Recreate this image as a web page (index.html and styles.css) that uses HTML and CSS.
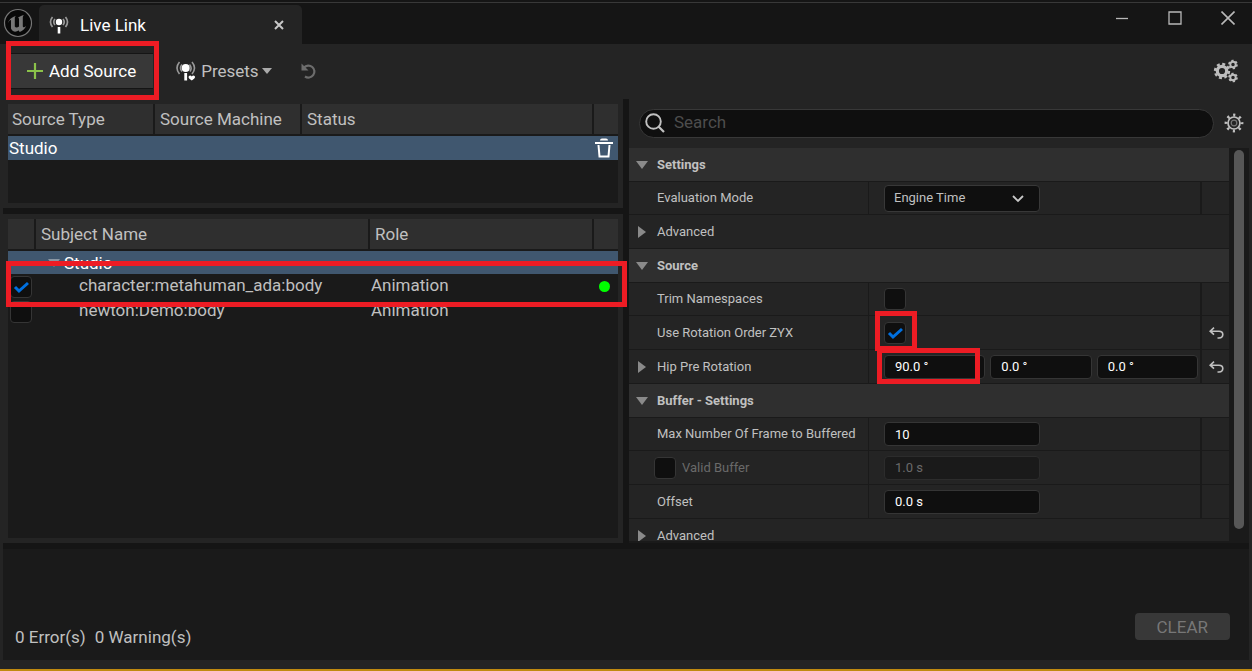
FILE: index.html
```html
<!DOCTYPE html>
<html lang="en">
<head>
<meta charset="utf-8">
<title>Live Link</title>
<link rel="stylesheet" href="styles.css">
</head>
<body>
<div class="window">
  <header class="titlebar">
    <svg class="logo" viewBox="0 0 30 30" aria-hidden="true">
      <circle cx="15" cy="15" r="13.5" fill="#080808" stroke="#777" stroke-width="1.2"/>
      <path d="M4.600 15.500C6 11.500 9 9 13 7.800C11.900 8.800 11.800 9.300 11.800 10.500V18.500C12.500 19.800 14.500 19.800 16 18.500V11C16 10 15.300 9.800 14.800 10C16.300 8.300 18.500 7.500 20.800 6.900C19.800 8.200 19.800 9 19.800 10V18C19.800 19.500 21 19.800 23.200 18C21.800 21 19.500 23 16.800 24L15.300 22.300C14.500 23.300 13.500 23.700 12 23.700C9.800 23.500 8.500 22 8 20.500V12.500C8 11.200 6.500 12 4.600 15.500Z" fill="#777"/>
    </svg>
    <div class="tab">
      <svg class="tab-icon" viewBox="0 0 20 20" aria-hidden="true">
        <g fill="none" stroke="#999" stroke-width="1.700"><path d="M3.500 2Q-.5 7 3.500 12M6 4Q3.500 7 6 10M16.500 2Q20.500 7 16.500 12M14 4Q16.500 7 14 10"/></g>
        <circle cx="10" cy="7" r="3.200" fill="#fff"/><path d="M8.700 12h2.600v6.500H8.700z" fill="#fff"/>
      </svg>
      <span class="tab-title">Live Link</span>
      <button class="icon-btn" aria-label="Close tab"><svg width="10" height="10" viewBox="0 0 10 10"><path d="M1 1l8 8M9 1l-8 8" stroke="#c8c8c8" stroke-width="2"/></svg></button>
    </div>
    <div class="window-buttons">
      <button class="icon-btn" aria-label="Minimize"><svg width="14" height="14" viewBox="0 0 14 14"><path d="M1 7.500h12" stroke="#b8b8b8" stroke-width="1.300"/></svg></button>
      <button class="icon-btn" aria-label="Maximize"><svg width="14" height="14" viewBox="0 0 14 14"><path d="M1 1h12v12H1z" fill="none" stroke="#b8b8b8" stroke-width="1.300"/></svg></button>
      <button class="icon-btn" aria-label="Close"><svg width="14" height="14" viewBox="0 0 14 14"><path d="M.5.5l13 13M13.500.5l-13 13" stroke="#b8b8b8" stroke-width="1.600"/></svg></button>
    </div>
  </header>

  <div class="toolbar">
    <div class="marked">
      <button class="add-source"><svg width="16" height="16" viewBox="0 0 16 16" aria-hidden="true"><path d="M8 0v16M0 8h16" stroke="#8bc24a" stroke-width="2.200"/></svg>Add Source</button>
      <span class="callout callout-add"></span>
    </div>
    <button class="tool presets">
      <svg width="20" height="20" viewBox="0 0 20 20" aria-hidden="true">
        <g fill="none" stroke="#999" stroke-width="1.600"><path d="M3.500 1Q-1.500 7 3.500 13M6 3.500Q3 7 6 10.500M16 1Q21 7 16 13M13.500 3.500Q16.500 7 14 10.500"/></g>
        <circle cx="9.700" cy="7" r="4" fill="#fff"/><path d="M8.300 12h2.800v7.500H8.300z" fill="#fff"/>
        <path d="M12.500 16.200q0-1.700 1.700-1.700 1 0 1.600 1 .6-1 1.600-1 1.700 0 1.700 1.700Q18.800 17.700 15.800 19.500 12.500 17.700 12.500 16.200" fill="#fff"/>
      </svg>
      <span>Presets</span>
      <svg class="caret" width="10" height="6" viewBox="0 0 10 6" aria-hidden="true"><path d="M0 0h10L5 6z" fill="#aaa"/></svg>
    </button>
    <button class="tool" aria-label="Revert changes"><svg width="18" height="18" viewBox="0 0 18 18"><path d="M4 5.500A6 6 0 1 1 5 14.500" fill="none" stroke="#6c6c6c" stroke-width="2.200"/><path d="M1.500 1.500v7h7z" fill="#6c6c6c"/></svg></button>
    <button class="tool gears" aria-label="Settings">
      <svg width="26" height="24" viewBox="0 0 26 24">
        <g fill="none" stroke="#bdbdbd">
          <circle cx="9" cy="12" r="4.700" stroke-width="3.200"/><circle cx="9" cy="12" r="7" stroke-width="2.400" stroke-dasharray="3 2.498"/>
          <circle cx="20" cy="5.500" r="2.700" stroke-width="1.900"/><circle cx="20" cy="5.500" r="4" stroke-width="1.700" stroke-dasharray="2.200 1.989"/>
          <circle cx="20" cy="18.500" r="2.700" stroke-width="1.900"/><circle cx="20" cy="18.500" r="4" stroke-width="1.700" stroke-dasharray="2.200 1.989"/>
        </g>
      </svg>
    </button>
  </div>

  <main class="workspace">
    <div class="lists">
      <section class="panel sources">
        <table class="list">
          <colgroup><col class="c-type"><col class="c-machine"><col><col class="c-end"></colgroup>
          <thead><tr><th>Source Type</th><th>Source Machine</th><th>Status</th><th></th></tr></thead>
          <tbody><tr class="selected"><td>Studio</td><td></td><td></td><td class="end-cell">
            <button class="icon-btn" aria-label="Remove source"><svg width="18" height="20" viewBox="0 0 18 20"><path d="M0 4h18v2H0zM5 2.500Q5 .500 7 .500h4q2 0 2 2z" fill="#fff"/><path d="M3.500 7l1 11.500h9l1-11.500" fill="none" stroke="#fff" stroke-width="2"/></svg></button>
          </td></tr></tbody>
        </table>
      </section>
      <section class="panel subjects">
        <table class="list">
          <colgroup><col class="c-check"><col><col class="c-role"><col class="c-end"></colgroup>
          <thead><tr><th></th><th>Subject Name</th><th>Role</th><th></th></tr></thead>
          <tbody>
            <tr class="selected group"><td></td><td><span class="group-name"><svg width="12" height="8" viewBox="0 0 12 8" aria-hidden="true"><path d="M0 0h12L6 8z" fill="#8a96a3"/></svg>Studio</span></td><td></td><td></td></tr>
            <tr class="subject"><td><input type="checkbox" class="check" id="ada" checked></td><td><label class="subject-name" for="ada">character:metahuman_ada:body</label></td><td>Animation</td><td class="end-cell"><span class="status-dot"></span></td></tr>
            <tr class="subject"><td><input type="checkbox" class="check" id="newton"></td><td><label class="subject-name" for="newton">newton:Demo:body</label></td><td>Animation</td><td></td></tr>
          </tbody>
        </table>
        <span class="callout callout-row"></span>
      </section>
    </div>

    <section class="details">
      <div class="search-row">
        <label class="search">
          <svg width="20" height="20" viewBox="0 0 20 20" aria-hidden="true"><circle cx="8.500" cy="8.500" r="7.300" fill="none" stroke="#c0c0c0" stroke-width="1.900"/><path d="M13.500 13.500l5.500 5.500" stroke="#c0c0c0" stroke-width="2.200"/></svg>
          <input type="text" placeholder="Search" aria-label="Search">
        </label>
        <button class="icon-btn" aria-label="View options"><svg width="20" height="20" viewBox="0 0 20 20"><g fill="none" stroke="#c0c0c0"><circle cx="10" cy="10" r="6" stroke-width="1.700"/><circle cx="10" cy="10" r="8" stroke-width="2.800" stroke-dasharray="2.200 4.083" stroke-dashoffset="1.100"/><circle cx="10" cy="10" r="2.800" stroke="#777" stroke-width="1.200"/></g></svg></button>
      </div>
      <div class="scroll-area">
        <div class="properties">
          <h2 class="category"><svg class="arrow" width="12" height="8" viewBox="0 0 12 8"><path d="M0 0h12L6 8z"/></svg>Settings</h2>
          <div class="row"><label class="name" for="mode">Evaluation Mode</label>
            <div class="value"><div class="select"><select id="mode"><option>Engine Time</option></select><svg width="12" height="8" viewBox="0 0 12 8" aria-hidden="true"><path d="M1 1l5 5 5-5" fill="none" stroke="#c8c8c8" stroke-width="1.800"/></svg></div></div><div class="reset"></div></div>
          <div class="row advanced"><svg class="arrow" width="12" height="12" viewBox="0 0 12 12"><path d="M2 0l8 6-8 6z"/></svg>Advanced</div>

          <h2 class="category"><svg class="arrow" width="12" height="8" viewBox="0 0 12 8"><path d="M0 0h12L6 8z"/></svg>Source</h2>
          <div class="row"><label class="name" for="trim">Trim Namespaces</label><div class="value"><input type="checkbox" class="check" id="trim"></div><div class="reset"></div></div>
          <div class="row"><label class="name" for="zyx">Use Rotation Order ZYX</label><div class="value"><div class="marked"><input type="checkbox" class="check" id="zyx" checked><span class="callout callout-check"></span></div></div>
            <div class="reset"><button class="icon-btn" aria-label="Reset rotation order"><svg width="15" height="12" viewBox="0 0 15 12"><path d="M5 .7L1.200 4.200 5 7.700M1.500 4.200H10Q13.800 4.200 13.800 7.500T10 11H8.500" fill="none" stroke="#c0c0c0" stroke-width="1.600"/></svg></button></div></div>
          <div class="row"><label class="name expandable" for="hip-x"><svg class="arrow" width="12" height="12" viewBox="0 0 12 12"><path d="M2 0l8 6-8 6z"/></svg>Hip Pre Rotation</label>
            <div class="value vector"><div class="marked axis"><input type="text" class="field" id="hip-x" value="90.0 °"><span class="callout callout-field"></span></div><div class="axis"><input type="text" class="field" aria-label="Hip Pre Rotation Y" value="0.0 °"></div><div class="axis"><input type="text" class="field" aria-label="Hip Pre Rotation Z" value="0.0 °"></div></div>
            <div class="reset"><button class="icon-btn" aria-label="Reset hip rotation"><svg width="15" height="12" viewBox="0 0 15 12"><path d="M5 .7L1.200 4.200 5 7.700M1.500 4.200H10Q13.800 4.200 13.800 7.500T10 11H8.500" fill="none" stroke="#c0c0c0" stroke-width="1.600"/></svg></button></div></div>

          <h2 class="category"><svg class="arrow" width="12" height="8" viewBox="0 0 12 8"><path d="M0 0h12L6 8z"/></svg>Buffer - Settings</h2>
          <div class="row"><label class="name" for="frames">Max Number Of Frame to Buffered</label><div class="value"><input type="text" class="field single" id="frames" value="10"></div><div class="reset"></div></div>
          <div class="row"><div class="name optional"><input type="checkbox" class="check" id="valid"><label for="valid">Valid Buffer</label></div><div class="value"><input type="text" class="field single" aria-label="Valid Buffer time" value="1.0 s" disabled></div><div class="reset"></div></div>
          <div class="row"><label class="name" for="offset">Offset</label><div class="value"><input type="text" class="field single" id="offset" value="0.0 s"></div><div class="reset"></div></div>
          <div class="row advanced"><svg class="arrow" width="12" height="12" viewBox="0 0 12 12"><path d="M2 0l8 6-8 6z"/></svg>Advanced</div>
        </div>
        <div class="scrollbar"><div class="thumb"></div></div>
      </div>
    </section>
  </main>

  <footer class="log">
    <p class="counts"><span>0 Error(s)</span><span>0 Warning(s)</span></p>
    <button class="clear" disabled>CLEAR</button>
  </footer>
</div>
</body>
</html>
```

FILE: styles.css
```css
* { box-sizing: border-box; }

body {
  margin: 0;
  background: #242424;
  color: #c0c0c0;
  font: 17px/20px Roboto, sans-serif;
}

button, input, select { font: inherit; color: inherit; margin: 0; }

button { border: 0; padding: 0; background: none; }

svg { display: block; flex: none; }

.window {
  display: flex;
  flex-direction: column;
  height: 100vh;
  padding-bottom: 9px;
  border-bottom: 2px solid #c08a10;
}

/* Title bar */

.titlebar {
  display: flex;
  flex: none;
  height: 44px;
  padding: 5px 17px 0 3px;
  background: linear-gradient(#151515 2px, #383838 2px, #383838 3px, #151515 3px);
}

.logo { width: 30px; height: 30px; margin-top: 3px; }

.tab {
  display: flex;
  align-items: center;
  width: 263px;
  margin-left: 6px;
  padding: 0 18px 0 10px;
  background: #242424;
  border-radius: 5px 5px 0 0;
  color: #fff;
}

.tab-icon { width: 20px; height: 20px; }

.tab-title { flex: 1; margin-left: 11px; }

.icon-btn { display: inline-flex; flex: none; }

.window-buttons {
  display: flex;
  align-items: center;
  gap: 39px;
  height: 26px;
  margin-left: auto;
}

/* Toolbar */

.toolbar {
  display: flex;
  flex: none;
  align-items: center;
  height: 55px;
  padding: 0 13px 2px 11px;
}

.marked { position: relative; display: flex; }

.add-source {
  display: flex;
  align-items: center;
  gap: 6px;
  height: 36px;
  padding: 0 17px 0 16px;
  background: #383838;
  border: solid #151515;
  border-width: 1px 0;
  color: #fff;
}

.tool { display: flex; align-items: center; gap: 5px; margin-left: 23px; }

.tool .caret { margin-left: -2px; }

.tool + .tool { margin-left: 28px; }

.toolbar .gears { margin-left: auto; }

/* Highlight frames laid over the controls */

.callout {
  position: absolute;
  z-index: 2;
  border: 5px solid #ed1c24;
  pointer-events: none;
}

.callout-add { inset: -12px -6px -11px -5px; }
.callout-row { top: 47px; left: 3px; right: -4px; height: 46px; }
.callout-check { inset: -11px -11px -7px -9px; }
.callout-field { inset: -7px 5px -5px -7px; }

/* Source and subject lists */

.workspace {
  display: grid;
  flex: 1;
  grid-template-columns: 1fr 1fr;
  gap: 6px;
  min-height: 0;
  padding: 0 3px;
  background: linear-gradient(#151515, #151515) content-box;
}

.lists { display: flex; flex-direction: column; gap: 6px; min-width: 0; }

.panel {
  position: relative;
  padding: 5px;
  background: linear-gradient(#1a1a1a, #1a1a1a) content-box, #242424;
}

.sources { height: 109px; }
.subjects { flex: 1; }

.list { width: 100%; table-layout: fixed; border-collapse: separate; border-spacing: 0; }

.list th, .list td { padding: 0 0 0 1px; text-align: left; font-weight: 400; white-space: nowrap; }

.list th {
  height: 32px;
  padding-left: 4px;
  background: #2f2f2f;
  border: solid #1a1a1a;
  border-width: 0 2px 2px 0;
}

.list th + th { padding-left: 5px; }

.list th:last-child { border-right: 0; }

.list .selected td { height: 24px; background: #40576f; color: #fff; }

.list .group td { height: 23px; }

.list .subject td { height: 25px; padding-top: 1px; vertical-align: top; }

.list .end-cell { text-align: right; padding-right: 5px; line-height: 0; }

.list .subject .end-cell { padding-top: 7px; }

.c-type { width: 147px; }
.c-machine { width: 147px; }
.c-end { width: 24px; }
.c-check { width: 28px; }
.c-role { width: 224px; }

.group-name { display: flex; align-items: center; gap: 4px; padding-left: 11px; }

.subject-name { padding-left: 42px; }

.subject .check { margin: 1px 0 0 1px; }

.status-dot {
  display: inline-block;
  width: 11px;
  height: 11px;
  margin-right: 3px;
  border-radius: 50%;
  background: #00ff00;
}

.check {
  appearance: none;
  display: block;
  flex: none;
  width: 22px;
  height: 22px;
  background: #0f0f0f;
  border: 1px solid #353535;
  border-radius: 4px;
}

.check:checked {
  background: #0f0f0f url("data:image/svg+xml,%3Csvg xmlns='http://www.w3.org/2000/svg' viewBox='0 0 20 20'%3E%3Cpath d='M4 10l4 4 9-8' fill='none' stroke='%230070e0' stroke-width='3'/%3E%3C/svg%3E") center / 20px;
}

/* Details */

.details {
  display: flex;
  flex-direction: column;
  min-width: 0;
  min-height: 0;
  background: #242424;
}

.search-row {
  display: flex;
  flex: none;
  align-items: center;
  gap: 10px;
  height: 49px;
  padding: 0 5px 1px 10px;
}

.search {
  display: flex;
  flex: 1;
  align-items: center;
  gap: 9px;
  height: 29px;
  padding-left: 5px;
  background: #0f0f0f;
  border: 1px solid #383838;
  border-radius: 15px;
}

.search input {
  flex: 1;
  min-width: 0;
  padding: 0 0 2px;
  border: 0;
  outline: 0;
  background: none;
}

.search input::placeholder { color: #4d4d4d; opacity: 1; }

.scroll-area { display: flex; flex: 1; min-height: 0; }

.properties {
  flex: 1;
  overflow: hidden;
  border-bottom: 2px solid #1a1a1a;
  font-size: 13px;
}

.category {
  display: flex;
  align-items: center;
  gap: 9px;
  height: 34px;
  margin: 0;
  padding-left: 7px;
  background: #2f2f2f;
  border-bottom: 1px solid #1a1a1a;
  font-size: 13px;
  font-weight: 700;
}

.arrow { fill: #8a8a8a; }

.row {
  display: grid;
  grid-template-columns: 40% 1fr 29px;
  height: 34px;
  border-bottom: 1px solid #1a1a1a;
}

.category + .row { height: 33px; }

.name {
  display: flex;
  align-items: center;
  padding-left: 28px;
  border-right: 1px solid #1a1a1a;
  white-space: nowrap;
}

.row.advanced, .name.expandable { display: flex; align-items: center; gap: 9px; padding-left: 7px; }

.name.optional { gap: 6px; padding-left: 25px; color: #6a6a6a; }

.value { display: flex; align-items: center; min-width: 0; padding: 0 2px 0 15px; }

.vector { gap: 5px; }

.axis { flex: 1; min-width: 0; }

.reset {
  display: flex;
  align-items: center;
  justify-content: center;
  padding-left: 2px;
  border-left: 2px solid #1a1a1a;
}

.field {
  width: 100%;
  min-width: 0;
  height: 24px;
  padding: 0 10px;
  background: #0f0f0f;
  border: 1px solid #353535;
  border-radius: 4px;
  color: #fff;
}

.single { width: 156px; }

.field:disabled { background: #1a1a1a; border-color: #2c2c2c; color: #6a6a6a; }

.select { position: relative; width: 156px; }

.select select {
  appearance: none;
  display: block;
  width: 100%;
  height: 27px;
  padding: 0 30px 0 9px;
  background: #0f0f0f;
  border: 1px solid #383838;
  border-radius: 4px;
}

.select svg { position: absolute; top: 10px; right: 16px; pointer-events: none; }

.scrollbar { width: 20px; padding: 2px 5px; background: #1a1a1a; }

.thumb { height: 97%; background: #575757; border-radius: 5px; }

/* Message log */

.log {
  display: flex;
  flex: none;
  align-items: flex-end;
  justify-content: space-between;
  height: 117px;
  margin: 0 3px;
  padding: 0 19px 13px 12px;
  background: #1a1a1a;
  border-top: 6px solid #151515;
}

.counts { display: flex; gap: 9px; margin: 0; }

.clear {
  height: 27px;
  margin-bottom: 7px;
  padding: 0 22px;
  background: #383838;
  border-radius: 4px;
  color: #777;
}
```
